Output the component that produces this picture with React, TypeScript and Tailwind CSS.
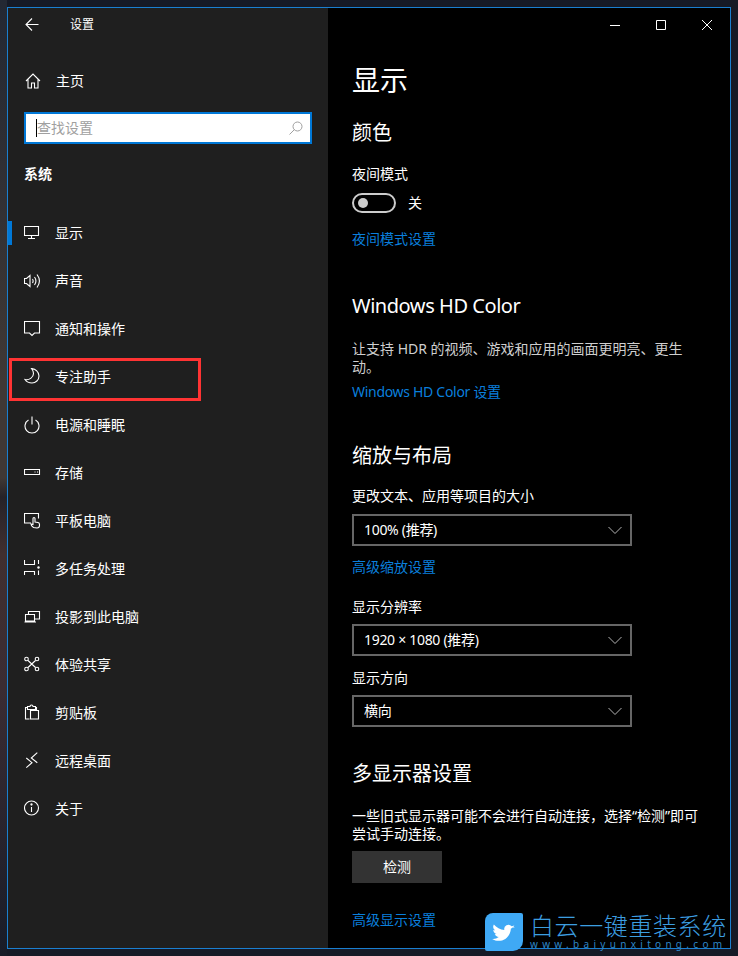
const ic = { fill: "none", stroke: "#fff", strokeWidth: 1.1 };

/* ─── Sidebar icons ─── */
const icons: Record<string, React.ReactNode> = {
  display: (
    <g {...ic}>
      <path d="M.5 2.500h14v9H.5zM7.500 11.500v2.500M4 14.500h7" />
    </g>
  ),
  sound: (
    <g {...ic}>
      <path d="M.5 6.500h2L6 3.500v11l-3.500-3H.5zM8.500 7c.8 1.300.8 2.700 0 4M10.500 5c1.800 2.500 1.800 5.500 0 8M13 2.500c3 4 3 9 0 13" />
    </g>
  ),
  notify: (
    <g {...ic}>
      <path d="M.5 1.500h15v11.500h-5l-2.500 2.500L5.500 13h-5z" />
    </g>
  ),
  moon: (
    <g {...ic}>
      <path d="M7.500.5c4 .3 7.500 3.500 7.500 7.500 0 4-3.300 7-7 7-2.800 0-5.500-1.300-7-3.500C5 12.500 9.500 9.500 9.500 5.500c0-2-.8-3.500-2-5z" />
    </g>
  ),
  power: (
    <g {...ic}>
      <path d="M8 .5v8M4.500 4a7 7 0 1 0 7 0" />
    </g>
  ),
  storage: (
    <g {...ic}>
      <path d="M.5 5.500h15v5H.5zM10.500 8h1M13 8h1" />
    </g>
  ),
  tablet: (
    <g {...ic}>
      <path d="M7 11H.5V1.500h14v5M9.500 15.500C8 14.500 7 13 7 12l2 .5V6.500a1 1 0 0 1 2 0V10l3 .5c1 .2 1.500 1 1.500 2v1c0 1.500-1 2.500-2.500 2.500z" />
    </g>
  ),
  tasks: (
    <g {...ic}>
      <path d="M.5 0V4.500h10V0M.5 15v-3.500h10V15M14.500 0v4M14.500 10.500V15" />
      <circle cx="14.500" cy="7.500" r="1.200" fill="#fff" stroke="none" />
    </g>
  ),
  project: (
    <g {...ic}>
      <path d="M4.500 6V3.500h11v7.500h-5M1.500 6.500h9V13h-9zM.5 14h11.500" />
    </g>
  ),
  share: (
    <g {...ic}>
      <circle cx="2.500" cy="3" r="1.800" />
      <circle cx="13" cy="3" r="1.800" />
      <circle cx="2.500" cy="13" r="1.800" />
      <circle cx="13" cy="13" r="1.800" />
      <path d="M4 4.500l7.500 7M11.500 4.500L4 11.500" />
    </g>
  ),
  clipboard: (
    <g {...ic}>
      <path d="M5.500 15H1.500V3.500h2M11 3.500h1.500v3M3.500 5.500V2.500h2.500a1.500 1.500 0 0 1 3 0h2.500v3zM6.500 6.500h8V15h-8z" />
    </g>
  ),
  remote: (
    <g {...ic}>
      <path d="M13.300.7L7.300 6l6 4.700M2.300 6L8 10.700l-5.700 5" />
    </g>
  ),
  about: (
    <g {...ic}>
      <circle cx="7.500" cy="8" r="7" />
      <path d="M7.500 7v5" />
      <circle cx="7.500" cy="4.500" r=".6" fill="#fff" />
    </g>
  ),
};

const navItems = [
  ["display", "显示"],
  ["sound", "声音"],
  ["notify", "通知和操作"],
  ["moon", "专注助手"],
  ["power", "电源和睡眠"],
  ["storage", "存储"],
  ["tablet", "平板电脑"],
  ["tasks", "多任务处理"],
  ["project", "投影到此电脑"],
  ["share", "体验共享"],
  ["clipboard", "剪贴板"],
  ["remote", "远程桌面"],
  ["about", "关于"],
];

function NavRow({ icon, label, active, boxed }: { icon: string; label: string; active?: boolean; boxed?: boolean }) {
  return (
    <div className="relative flex h-12 items-center pl-4 text-[14px] leading-[20px] text-white">
      {active && <div className="absolute left-0 top-[12px] h-6 w-1 bg-[#0078d7]" />}
      {boxed && <div className="absolute left-[1px] top-[5px] h-[43px] w-[192px] border-[3px] border-[#ff3333]" />}
      <svg width="18" height="18" viewBox="0 0 18 18" className="mr-[13px] shrink-0">
        {icons[icon]}
      </svg>
      {label}
    </div>
  );
}

function Select({ value }: { value: string }) {
  return (
    <div className="flex h-8 w-[280px] items-center justify-between border-2 border-[#666666] pl-[10px] pr-2 text-[14px] leading-[20px] tracking-[-0.3px] text-white">
      {value}
      <svg width="14" height="8" viewBox="0 0 14 8" fill="none" stroke="#b3b3b3" strokeWidth="1">
        <path d="M.5 1L7 7.500 13.500 1" />
      </svg>
    </div>
  );
}

function Link({ children, className }: { children: React.ReactNode; className?: string }) {
  return <div className={`text-[14px] leading-[20px] text-[#0a7fdc] ${className ?? ""}`}>{children}</div>;
}

export default function App() {
  return (
    <div className="relative h-[956px] w-[738px] overflow-hidden bg-[#161a26] p-[7px] font-['Noto_Sans','Noto_Sans_CJK_SC',sans-serif]">
      {/* desktop wallpaper seen at the left edge */}
      <div className="absolute bottom-0 left-0 top-0 w-[7px] bg-[linear-gradient(180deg,#232833_0%,#3f3835_40%,#3f3835_50%,#252228_52%,#402f30_58%,#3a2c33_72%,#181c28_100%)]" />
      <div className="relative flex h-[942px] w-[724px] border border-[#1a7fd0]">
        {/* Sidebar */}
        <aside className="flex h-full w-[320px] shrink-0 flex-col bg-[#1f1f1f]">
          <div className="flex h-8 items-center pt-[1px] text-[12px] leading-[16px] text-white">
            <svg width="16" height="16" viewBox="0 0 16 16" className="ml-[17px] mr-[29px]" fill="none" stroke="#fff" strokeWidth="1.1">
              <path d="M1.500 7.500h12M7 1.500l-6 6 6 6" />
            </svg>
            设置
          </div>
          <div className="mt-[17px] flex h-12 items-center pl-[17px] text-[14px] leading-[20px] text-white">
            <svg width="16" height="16" viewBox="0 0 16 16" className="mr-[15px] shrink-0" fill="none" stroke="#fff" strokeWidth="1.1">
              <path d="M1 8l7-7 7 7M3 6.500V15h3.500v-5h3v5H13V6.500" />
            </svg>
            主页
          </div>
          <div className="ml-4 mt-[7px] flex h-8 w-[288px] items-center border-2 border-[#0078d7] bg-white pl-[10px] pr-[7px] text-[14px] leading-[18px] text-[#a0a0a0]">
            <div className="h-[18px] w-px bg-black" />
            <span className="flex-1">查找设置</span>
            <svg width="14" height="14" viewBox="0 0 14 14" fill="none" stroke="#a0a0a0" strokeWidth="1">
              <circle cx="8.500" cy="5.500" r="4.500" />
              <path d="M5.500 8.500L.5 13.500" />
            </svg>
          </div>
          <div className="ml-4 mt-5 text-[14px] font-bold leading-[20px] text-white">系统</div>
          <nav className="mt-[25px]">
            {navItems.map(([icon, label]) => (
              <NavRow key={icon} icon={icon} label={label} active={icon === "display"} boxed={icon === "moon"} />
            ))}
          </nav>
        </aside>

        {/* Content */}
        <main className="relative flex-1 bg-black pl-6 text-white">
          <div className="absolute right-[15px] top-[11px] flex items-center gap-[30px]">
            <svg width="16" height="12" viewBox="0 0 16 12" stroke="#fff" strokeWidth="1"><path d="M3 6.500h10" /></svg>
            <svg width="16" height="12" viewBox="0 0 16 12" fill="none" stroke="#fff" strokeWidth="1"><path d="M3.500 1.500h9v9h-9z" /></svg>
            <svg width="16" height="12" viewBox="0 0 16 12" fill="none" stroke="#fff" strokeWidth="1"><path d="M3 1l10 10M13 1L3 11" /></svg>
          </div>
          <h1 className="pt-[52px] text-[28px] font-normal leading-[40px]">显示</h1>
          <h2 className="mt-[19px] text-[20px] font-normal leading-[28px]">颜色</h2>
          <div className="mt-[17px] text-[14px] leading-[20px]">夜间模式</div>
          <div className="mt-[9px] flex items-center text-[14px] leading-[20px]">
            <div className="flex h-5 w-11 items-center rounded-full border-2 border-[#cccccc] pl-1">
              <div className="h-[10px] w-[10px] rounded-full bg-[#cccccc]" />
            </div>
            <span className="ml-3">关</span>
          </div>
          <Link className="mt-4">夜间模式设置</Link>
          <h2 className="mt-[43px] text-[20px] font-normal leading-[28px] tracking-[-0.45px]">Windows HD Color</h2>
          <p className="mt-[20px] w-[344px] text-[14px] leading-[18px] text-[#cfcfcf]">让支持 HDR 的视频、游戏和应用的画面更明亮、更生动。</p>
          <Link className="mt-[6px] tracking-[-0.3px]">Windows HD Color 设置</Link>
          <h2 className="mt-[40px] text-[20px] font-normal leading-[28px]">缩放与布局</h2>
          <div className="mt-[16px] text-[14px] leading-[20px]">更改文本、应用等项目的大小</div>
          <div className="mt-2"><Select value="100% (推荐)" /></div>
          <Link className="mt-[11px]">高级缩放设置</Link>
          <div className="mt-5 text-[14px] leading-[20px]">显示分辨率</div>
          <div className="mt-[7px]"><Select value="1920 × 1080 (推荐)" /></div>
          <div className="mt-3 text-[14px] leading-[20px]">显示方向</div>
          <div className="mt-[7px]"><Select value="横向" /></div>
          <h2 className="mt-[33px] text-[20px] font-normal leading-[28px]">多显示器设置</h2>
          <p className="mt-[19px] w-[356px] text-[14px] leading-[18px]">一些旧式显示器可能不会进行自动连接，选择“检测”即可尝试手动连接。</p>
          <div className="mt-[8px] flex h-8 w-[90px] items-center justify-center bg-[#333333] text-[14px] leading-[20px]">检测</div>
          <Link className="mt-[27px]">高级显示设置</Link>
        </main>
      </div>

      {/* Watermark */}
      <div className="absolute left-[485px] top-[913px] flex items-start">
        <div className="flex h-[38px] w-[38px] items-center justify-center rounded-tl-[8px] rounded-br-[10px] rounded-tr-[2px] rounded-bl-[2px] bg-[#3fa9f5]">
          <svg width="28" height="22" viewBox="0 0 30 26" fill="#fff">
            <path d="M28 7c-1 .5-2 .7-3 .8 1-.7 1.800-1.700 2.200-2.900-1 .6-2 1-3.200 1.200a5 5 0 0 0-8.600 4.500C10.500 10 6 7.500 3 4c-1.500 2.500-.8 5.500 1.500 7-.8 0-1.600-.2-2.200-.6 0 2.500 1.700 4.500 4 5-.7.2-1.500.2-2.200.1.700 2 2.500 3.400 4.700 3.500-2.200 1.700-5 2.500-7.800 2.200 8 5 20 1.500 22-11 0-.3 0-.6 0-.9 1-.7 2-1.600 3-2.300z" />
          </svg>
        </div>
        <div className="ml-[7px] flex flex-col pt-[1px] text-[#3c9ee0]">
          <span className="text-[24px] font-light leading-[24px] tracking-[0.6px]">白云一键重装系统</span>
          <span className="text-[10px] leading-[12px] tracking-[4.300px] text-[#2f86c6]">www.baiyunxitong.com</span>
        </div>
      </div>
    </div>
  );
}
